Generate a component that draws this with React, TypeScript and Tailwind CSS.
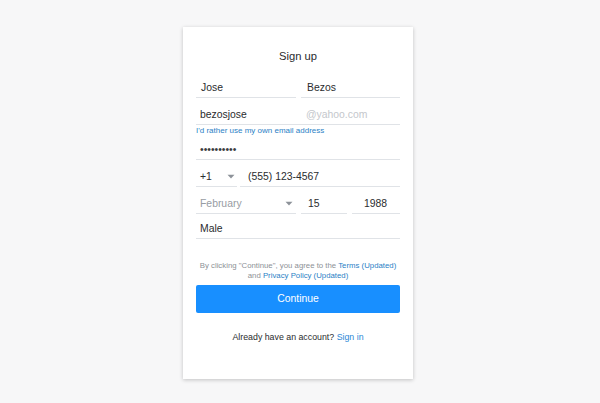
import React from "react";

const Chevron = () => (
  <svg width="8" height="5" viewBox="0 0 8 5" className="shrink-0">
    <path d="M0.5 0.8 L7.5 0.8 L4 4.4 Z" fill="#8d9299" />
  </svg>
);

export default function App() {
  return (
    <div
      className="w-[600px] h-[403px] bg-[#f7f7f8] pl-[183px] pt-[27px]"
      style={{ fontFamily: '"Liberation Sans", Arial, sans-serif' }}
    >
      <div className="w-[230px] h-[352px] bg-white shadow-[0_1px_4px_rgba(0,0,0,0.22)] px-[13px] flex flex-col">
        <div className="mt-[23px] h-[13px] leading-[13px] text-[11.2px] text-[#2a2c2e] text-center">
          Sign up
        </div>

        {/* name row */}
        <div className="mt-[8px] flex gap-[5px] text-[10.4px] text-[#2a2c2e]">
          <div className="w-[100px] h-[27px] border-b border-[#e0e3e7] flex items-end pb-[3px] pl-[5px] leading-[13px]">
            Jose
          </div>
          <div className="flex-1 h-[27px] border-b border-[#e0e3e7] flex items-end pb-[3px] pl-[6px] leading-[13px]">
            Bezos
          </div>
        </div>

        {/* email row */}
        <div className="h-[27px] border-b border-[#e0e3e7] flex items-end pb-[3px] text-[10.4px] leading-[13px]">
          <div className="w-[105px] pl-[4px] text-[#2a2c2e]">bezosjose</div>
          <div className="pl-[5px] text-[#c4c7cc]">@yahoo.com</div>
        </div>

        <div className="h-[12px] leading-[12px] text-[8px] text-[#2b7fc6]">
          I'd rather use my own email address
        </div>

        {/* password */}
        <div className="h-[23px] border-b border-[#e0e3e7] flex items-end pb-[3px] pl-[4px] text-[10.4px] leading-[13px] text-[#3a3c3e]">
          ••••••••••
        </div>

        {/* phone */}
        <div className="flex gap-[3px] text-[10.4px] text-[#2a2c2e]">
          <div className="w-[41px] h-[27px] border-b border-[#e0e3e7] flex items-end pb-[3px] pl-[4px] leading-[13px] justify-between pr-[2px]">
            <span>+1</span>
            <span className="mb-[4px]">
              <Chevron />
            </span>
          </div>
          <div className="flex-1 h-[27px] border-b border-[#e0e3e7] flex items-end pb-[3px] pl-[8px] leading-[13px]">
            (555) 123-4567
          </div>
        </div>

        {/* birthday */}
        <div className="flex gap-[5px] text-[10.4px]">
          <div className="w-[100px] h-[27px] border-b border-[#e0e3e7] flex items-end pb-[3px] pl-[4px] pr-[3px] leading-[13px] justify-between text-[#979ca3]">
            <span>February</span>
            <span className="mb-[4px]">
              <Chevron />
            </span>
          </div>
          <div className="w-[46px] h-[27px] border-b border-[#e0e3e7] flex items-end pb-[3px] pl-[7px] leading-[13px] text-[#2a2c2e]">
            15
          </div>
          <div className="flex-1 h-[27px] border-b border-[#e0e3e7] flex items-end pb-[3px] pl-[12px] leading-[13px] text-[#2a2c2e]">
            1988
          </div>
        </div>

        {/* gender */}
        <div className="h-[25px] border-b border-[#e0e3e7] flex items-end pb-[3px] pl-[4px] text-[10.4px] leading-[13px] text-[#2a2c2e]">
          Male
        </div>

        {/* legal */}
        <div className="mt-[22px] text-[7.8px] leading-[9.5px] text-[#8d9196] text-center">
          By clicking "Continue", you agree to the{" "}
          <span className="text-[#2b7fc6]">Terms (Updated)</span>
          <br />
          and <span className="text-[#2b7fc6]">Privacy Policy (Updated)</span>
        </div>

        <button className="mt-[5px] h-[28px] w-full bg-[#188fff] rounded-[2px] text-white text-[10.4px] flex items-center justify-center">
          Continue
        </button>

        <div className="mt-[19px] h-[11px] leading-[11px] text-[8.8px] text-[#2a2c2e] text-center">
          Already have an account? <span className="text-[#2b87d6]">Sign in</span>
        </div>
      </div>
    </div>
  );
}
